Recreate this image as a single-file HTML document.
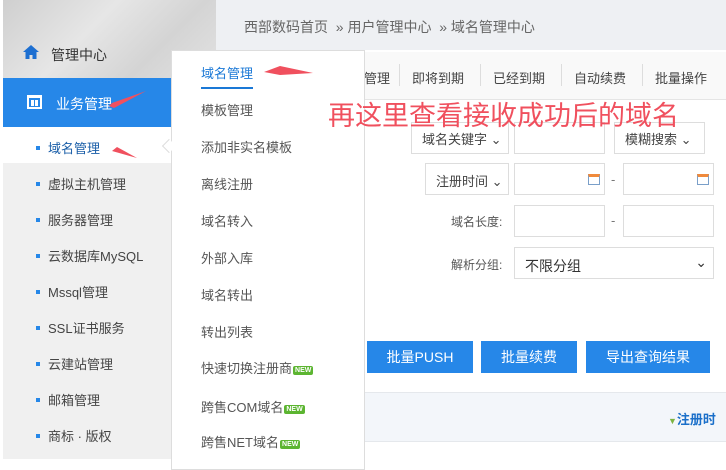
<!DOCTYPE html><html><head><meta charset="utf-8"><style>
*{margin:0;padding:0;box-sizing:border-box}
body{width:726px;height:459px;overflow:hidden;position:relative;background:#fff;font-family:"Liberation Sans","Noto Sans CJK SC",sans-serif;font-size:13px;color:#444}
.a{position:absolute;white-space:nowrap}
.side{left:3px;top:0;width:168px;height:459px;background:#f0f0f0}
.top{left:3px;top:0;width:213px;height:78px;background:linear-gradient(135deg,#cfcfcf,#e6e6e6 40%,#d4d4d4 70%,#e2e2e2)}
.blue{left:3px;top:78px;width:168px;height:49px;background:#2687e8}
.sub{left:48px;font-size:13px;color:#444}
.sub:before{content:"";position:absolute;left:-12px;top:8px;width:4px;height:4px;background:#2687e8}
.dd{left:171px;top:50px;width:194px;height:420px;background:#fff;border:1px solid #ddd}
.di{left:201px;font-size:13px;color:#555}
.new{display:inline-block;background:#5cb531;color:#fff;font-size:7px;line-height:9px;padding:0 2px;border-radius:2px;vertical-align:1px;margin-left:1px;font-weight:bold}
.inp{border:1px solid #ddd;background:#fff;height:32px}
.btn{background:#2687e8;color:#fff;font-size:14px;text-align:center;line-height:32px;height:32px}
.tab{font-size:13px;color:#444;top:68px}
.sep{top:64px;width:1px;height:22px;background:#ddd}
</style></head><body>
<div class="a" style="left:216px;top:0;width:510px;height:50px;background:#eef0f3"></div>
<div class="a" style="left:244px;top:17px;font-size:14px;color:#666">西部数码首页 &nbsp;»&nbsp;用户管理中心 &nbsp;»&nbsp;域名管理中心</div>
<div class="a" style="left:364px;top:52px;width:362px;height:48px;background:#f9f9f9;border-bottom:1px solid #e5e5e5"></div>
<div class="a tab" style="left:364px">管理</div><div class="a sep" style="left:399px"></div>
<div class="a tab" style="left:412px">即将到期</div><div class="a sep" style="left:480px"></div>
<div class="a tab" style="left:493px">已经到期</div><div class="a sep" style="left:561px"></div>
<div class="a tab" style="left:574px">自动续费</div><div class="a sep" style="left:642px"></div>
<div class="a tab" style="left:655px">批量操作</div>
<div class="a inp" style="left:411px;top:122px;width:98px;font-size:13px;padding:6px 0 0 10px">域名关键字 ⌄</div>
<div class="a inp" style="left:514px;top:122px;width:91px"></div>
<div class="a inp" style="left:614px;top:122px;width:91px;padding:6px 0 0 10px">模糊搜索 ⌄</div>
<div class="a inp" style="left:425px;top:163px;width:84px;padding:7px 0 0 10px">注册时间 ⌄</div>
<div class="a inp" style="left:514px;top:163px;width:91px"></div><div class="a" style="left:588px;top:174px;width:12px;height:11px;border:1px solid #7a9fc9;background:#fff;border-top:3px solid #f08a3c"></div>
<div class="a" style="left:611px;top:172px;color:#777">-</div>
<div class="a inp" style="left:623px;top:163px;width:91px"></div><div class="a" style="left:697px;top:174px;width:12px;height:11px;border:1px solid #7a9fc9;background:#fff;border-top:3px solid #f08a3c"></div>
<div class="a" style="left:451px;top:213px;font-size:12px;color:#555">域名长度:</div>
<div class="a inp" style="left:514px;top:205px;width:91px"></div>
<div class="a" style="left:611px;top:213px;color:#777">-</div>
<div class="a inp" style="left:623px;top:205px;width:91px"></div>
<div class="a" style="left:451px;top:256px;font-size:12px;color:#555">解析分组:</div>
<div class="a inp" style="left:514px;top:247px;width:200px;padding:8px 0 0 10px;font-size:14px;color:#333">不限分组<span style="position:absolute;right:6px;top:6px">⌄</span></div>
<div class="a btn" style="left:367px;top:341px;width:106px">批量PUSH</div>
<div class="a btn" style="left:481px;top:341px;width:96px">批量续费</div>
<div class="a btn" style="left:586px;top:341px;width:124px">导出查询结果</div>
<div class="a" style="left:355px;top:392px;width:371px;height:50px;background:#f3f6fa;border-top:1px solid #e5e8ec;border-bottom:1px solid #e5e8ec"></div>
<div class="a" style="left:668px;top:409px;font-size:13px;color:#1a6fc9;font-weight:bold"><span style="color:#7cb342;font-size:9px">▼</span>注册时</div>
<div class="a side"></div>
<div class="a top"></div>
<svg class="a" style="left:22px;top:44px" width="18" height="16" viewBox="0 0 18 16"><path d="M9 1L1 8h2.5v7h4v-4h3v4h4V8H17z" fill="#1d6fd1"/></svg>
<div class="a" style="left:51px;top:45px;font-size:14px;color:#333">管理中心</div>
<div class="a blue"></div>
<div class="a" style="left:27px;top:95px;width:15px;height:14px;border:2px solid #fff;border-top-width:3px"></div>
<div class="a" style="left:31px;top:100px;width:7px;height:6px;border-left:3px solid #fff;border-right:3px solid #fff"></div>
<div class="a" style="left:56px;top:94px;font-size:14px;color:#fff">业务管理</div>
<div class="a" style="left:3px;top:127px;width:168px;height:36px;background:#fff"></div>
<div class="a sub" style="top:138px;color:#1a5ea8">域名管理</div>
<div class="a sub" style="top:174px">虚拟主机管理</div>
<div class="a sub" style="top:210px">服务器管理</div>
<div class="a sub" style="top:246px">云数据库MySQL</div>
<div class="a sub" style="top:282px">Mssql管理</div>
<div class="a sub" style="top:318px">SSL证书服务</div>
<div class="a sub" style="top:354px">云建站管理</div>
<div class="a sub" style="top:390px">邮箱管理</div>
<div class="a sub" style="top:426px">商标 · 版权</div>
<div class="a dd"></div>
<div class="a" style="left:164px;top:141px;width:10px;height:10px;background:#fff;border-left:1px solid #ddd;border-bottom:1px solid #ddd;transform:rotate(45deg)"></div>
<div class="a di" style="top:63px;color:#1a78d6;border-bottom:2px solid #1a78d6;padding-bottom:5px">域名管理</div>
<div class="a di" style="top:100px">模板管理</div>
<div class="a di" style="top:137px">添加非实名模板</div>
<div class="a di" style="top:174px">离线注册</div>
<div class="a di" style="top:211px">域名转入</div>
<div class="a di" style="top:248px">外部入库</div>
<div class="a di" style="top:285px">域名转出</div>
<div class="a di" style="top:322px">转出列表</div>
<div class="a di" style="top:358px">快速切换注册商<span class="new">NEW</span></div>
<div class="a di" style="top:397px">跨售COM域名<span class="new">NEW</span></div>
<div class="a di" style="top:432px">跨售NET域名<span class="new">NEW</span></div>
<div class="a" style="left:328px;top:98px;font-size:27px;color:#f0505e;line-height:36px">再这里查看接收成功后的域名</div>
<svg class="a" style="left:0;top:0" width="726" height="459"><g fill="#f0505e"><path d="M264 72L280 66L313 73L280 75Z"/><path d="M112 103L146 91L114 108L109 106Z"/><path d="M112 151L137 158L117 147Z"/></g></svg>
</body></html>
